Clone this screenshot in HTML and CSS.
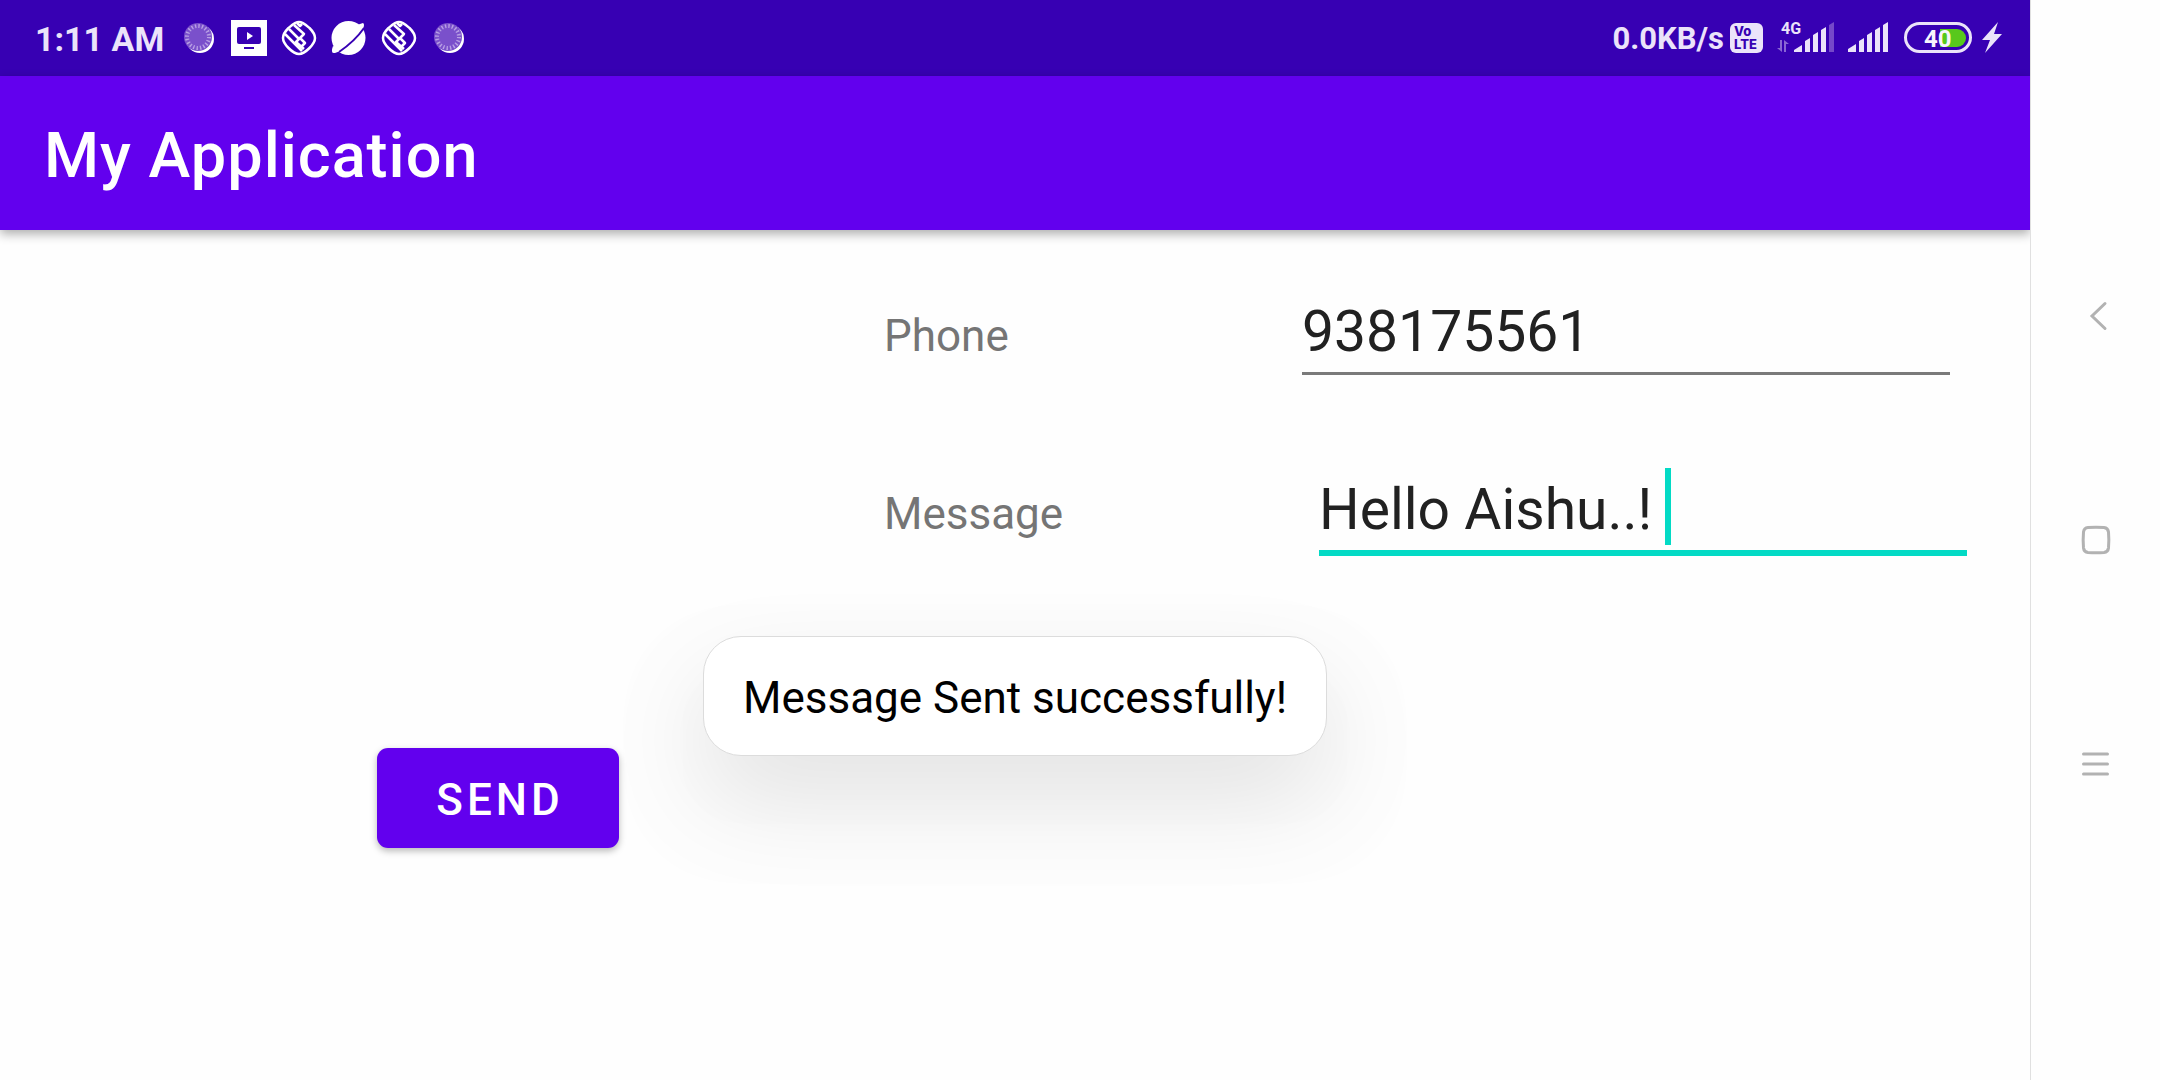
FILE: index.html
```html
<!DOCTYPE html>
<html lang="en">
<head>
<meta charset="utf-8">
<meta name="viewport" content="width=device-width, initial-scale=1">
<title>My Application</title>
<link rel="stylesheet" href="styles.css">
</head>
<body>
<svg width="0" height="0" class="defs" aria-hidden="true">
  <symbol id="moon" viewBox="0 0 36 36">
    <circle cx="19" cy="19" r="14" fill="#fff"/>
    <circle cx="17" cy="17" r="14" fill="#7a50cb"/>
    <circle cx="17" cy="17" r="11" fill="none" stroke="#b9a0e4" stroke-width="4" stroke-dasharray="1.4 2.056"/>
  </symbol>
  <symbol id="weave" viewBox="0 0 36 36">
    <g fill="none" stroke="#fff" stroke-width="2.5" stroke-linejoin="round">
      <path d="M18 2C22 2 25 5 28.500 8C31.500 11 34 14 34 18C34 22 31.500 25 28.500 28C25 31.500 22 34 18 34C14 34 11 31.500 7.500 28C4.500 25 2 22 2 18C2 14 4.500 11 7.500 8C11 5 14 2 18 2Z"/>
      <path d="M4 14L21 31M8 9L18 19L15 22L23 29"/>
      <path d="M13 5L23 14L19 18L24 23L20 27M16 3L19 6L21 4"/>
    </g>
  </symbol>
</svg>
<div class="device">
  <div class="screen">
    <div class="status-bar">
      <div class="status-group">
        <span class="clock">1:11 AM</span>
        <div class="notifications">
          <svg class="notice"><use href="#moon"/></svg>
          <svg class="notice" viewBox="0 0 36 36">
            <path fill="#fff" d="M0 0h36v36H0z"/>
            <rect x="6" y="7" width="24" height="17" rx="2" fill="#3700b3"/>
            <path fill="#fff" d="M16 12v8l6-4z"/>
            <path fill="#3700b3" d="M13 27h10v2H13z"/>
          </svg>
          <svg class="notice"><use href="#weave"/></svg>
          <svg class="notice" viewBox="0 0 36 36">
            <circle cx="17.500" cy="18" r="17" fill="#fff"/>
            <path fill="#fff" d="M26 5L32 3Q34 4 32 9L28 14zM2 26Q-1 34 4 33L12 30z"/>
            <path d="M33 8Q24 21 8 32" fill="none" stroke="#3700b3" stroke-width="2"/>
          </svg>
          <svg class="notice"><use href="#weave"/></svg>
          <svg class="notice"><use href="#moon"/></svg>
        </div>
      </div>
      <div class="status-group">
        <span class="speed">0.0KB/s</span>
        <span class="volte"><span>Vo</span><span>LTE</span></span>
        <svg class="signal-data" viewBox="0 0 58 36" fill="#ebe3fa">
          <text x="5" y="14" class="network">4G</text>
          <path fill="#8a66d3" d="M4 20h2v12L1 28h3zM8 32V20l5 4h-3v8z"/>
          <path d="M18 32v-2l8-5v7zM29 32V21l5-3v14zM37 32V15l5-3v20zM45 32V10l5-3v25z"/>
          <path fill="#7548c9" d="M53 32V5l5-3v30z"/>
        </svg>
        <svg class="signal" viewBox="0 0 40 36" fill="#ebe3fa">
          <path d="M0 32v-3l8-5v8zM11 32V21l5-3v14zM19 32V15l5-3v20zM27 32V10l5-3v25zM35 32V5l5-3v30z"/>
        </svg>
        <svg class="battery" viewBox="0 0 68 36">
          <rect x="1.500" y="3.500" width="65" height="28" rx="14" fill="none" stroke="#ebe3fa" stroke-width="3"/>
          <path d="M36 9h17a9 9 0 0 1 0 18H36z" fill="#58c81c"/>
          <text x="20" y="27" class="charge">40</text>
        </svg>
        <svg class="bolt" viewBox="0 0 20 36"><path d="M16 2L0 20h8L3 33L20 14h-8z" fill="#ebe3fa"/></svg>
      </div>
    </div>
    <header class="app-bar"><h1>My Application</h1></header>
    <main class="content">
      <form class="form">
        <div class="row">
          <label for="phone">Phone</label>
          <div class="field"><input id="phone" type="tel" value="938175561"></div>
        </div>
        <div class="row row-active">
          <label for="message">Message</label>
          <div class="field"><input id="message" type="text" value="Hello Aishu..! "><span class="caret"></span></div>
        </div>
        <button class="send" type="button">SEND</button>
      </form>
    </main>
    <div class="toast" role="status">Message Sent successfully!</div>
  </div>
  <nav class="nav-bar" aria-label="System navigation">
    <button class="nav-button" type="button" aria-label="Back"><svg viewBox="0 0 28 28"><path d="M23 1.500L10 14L23 26.500"/></svg></button>
    <button class="nav-button" type="button" aria-label="Home"><svg viewBox="0 0 28 28"><path d="M6 1.500Q14 .8 22 1.500Q26 2 26.500 6Q27.200 14 26.500 22Q26 26 22 26.500Q14 27.200 6 26.500Q2 26 1.500 22Q.8 14 1.500 6Q2 2 6 1.500Z"/></svg></button>
    <button class="nav-button" type="button" aria-label="Recent apps"><svg viewBox="0 0 28 28"><path d="M1.500 4H25.500M1.500 14H25.500M1.500 24H25.500"/></svg></button>
  </nav>
</div>
</body>
</html>
```
FILE: styles.css
```css
* { box-sizing: border-box; }

body {
  margin: 0;
  background: #fefefe;
  font-family: Roboto, "Liberation Sans", sans-serif;
}

.defs { position: absolute; }

svg { display: block; flex: none; overflow: visible; }

.device { display: flex; min-height: 100vh; }

.screen { position: relative; flex: 1; min-width: 0; }

.status-bar {
  display: flex;
  justify-content: space-between;
  align-items: center;
  height: 76px;
  padding: 0 28px 0 35px;
  background: #3700b3;
  color: #ebe3fa;
}

.status-group { display: flex; align-items: center; }

.clock, .speed { line-height: 40px; padding-top: 2px; font-weight: 700; white-space: nowrap; }

.clock { font-size: 34px; }

.speed { font-size: 31px; }

.notifications { display: flex; gap: 14px; margin-left: 17px; }

.notice { width: 36px; height: 36px; }

.volte {
  display: flex;
  flex-direction: column;
  width: 33px;
  height: 30px;
  margin: 0 13px 0 6px;
  padding: 2px 4px;
  border-radius: 6px;
  background: #ebe3fa;
  color: #3700b3;
  font: 800 13px/13px Inter, sans-serif;
}

.signal-data { width: 58px; height: 36px; margin-right: 14px; }

.network { font-size: 16px; font-weight: 700; }

.signal { width: 40px; height: 36px; margin-right: 16px; }

.battery { width: 68px; height: 36px; margin-right: 10px; }

.charge { font-size: 24px; font-weight: 700; fill: #f7f4fd; }

.bolt { width: 20px; height: 36px; }

.app-bar {
  display: flex;
  align-items: center;
  height: 154px;
  padding: 6px 44px 0;
  background: #6200ee;
  color: #fff;
  box-shadow: 0 4px 10px rgba(0, 0, 0, .32);
}

.app-bar h1 {
  margin: 0;
  font-size: 63px;
  font-weight: 500;
  line-height: 76px;
  letter-spacing: 1px;
}

.form { display: flex; flex-direction: column; padding: 60px 80px 0 0; }

.row {
  display: flex;
  justify-content: flex-end;
  align-items: baseline;
  margin-bottom: 93px;
}

.row label { width: 418px; color: #757575; font-size: 44px; line-height: 52px; }

.field {
  position: relative;
  width: 648px;
  height: 85px;
  border-bottom: 3px solid #7a7a7a;
}

.field input {
  display: block;
  width: 100%;
  height: 80px;
  padding: 3px 0 0;
  border: 0;
  outline: 0;
  background: none;
  color: #212121;
  font: 400 57px/77px Roboto, "Liberation Sans", sans-serif;
}

.row-active { margin-right: -17px; margin-bottom: 192px; }

.row-active label { width: 435px; }

.row-active .field { height: 88px; border-bottom: 6px solid #03dac5; }

.caret {
  position: absolute;
  top: 0;
  left: 346px;
  width: 6px;
  height: 77px;
  background: #03dac5;
}

.send {
  width: 242px;
  height: 100px;
  margin-left: 377px;
  padding: 4px 0 0 4px;
  border: 0;
  border-radius: 11px;
  background: #6200ee;
  color: #fff;
  font: 500 44px/52px Roboto, "Liberation Sans", sans-serif;
  letter-spacing: 4px;
  box-shadow: 0 3px 7px rgba(0, 0, 0, .28);
}

.toast {
  position: absolute;
  top: 636px;
  left: 50%;
  transform: translateX(-50%);
  padding: 36px 39px 32px;
  border: 1px solid #dcdcdc;
  border-radius: 38px;
  background: #fff;
  color: #000;
  font-size: 44px;
  line-height: 50px;
  white-space: nowrap;
  box-shadow: 0 44px 100px rgba(0, 0, 0, .1), 0 48px 50px 80px rgba(0, 0, 0, .006);
}

.nav-bar {
  position: relative;
  display: flex;
  flex-direction: column;
  align-items: center;
  justify-content: center;
  gap: 168px;
  width: 130px;
  border-left: 1px solid #e0e0e0;
  background: #fefefe;
}

.nav-button { padding: 14px; border: 0; background: none; }

.nav-button svg {
  width: 28px;
  height: 28px;
  fill: none;
  stroke: #b2b2b2;
  stroke-width: 3;
  stroke-linecap: round;
}
```
